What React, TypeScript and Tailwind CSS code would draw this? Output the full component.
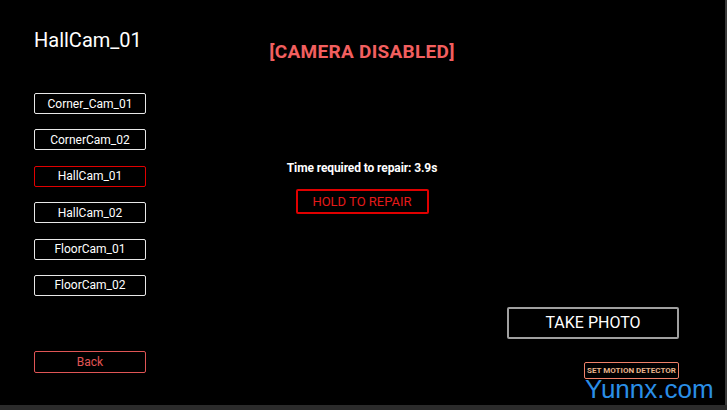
import React from "react";

const cams = ["Corner_Cam_01", "CornerCam_02", "HallCam_01", "HallCam_02", "FloorCam_01", "FloorCam_02"];

export default function App() {
  return (
    <div className="relative w-[727px] h-[410px] bg-black flex flex-col overflow-hidden" style={{ fontFamily: "Roboto, 'Liberation Sans', sans-serif" }}>
      <div className="flex flex-row h-[405px]">
        <div className="flex-1 flex flex-row">
          {/* left column */}
          <div className="w-[146px] shrink-0 pl-[34px] pt-[27px] flex flex-col">
            <div className="text-white text-[20px] leading-[26px] h-[26px]">HallCam_01</div>
            <div className="mt-[40px] flex flex-col gap-[15.4px]">
              {cams.map((c, i) => (
                <div
                  key={c}
                  className={
                    "w-[112px] h-[21px] rounded-[2px] border-[1.5px] flex items-center justify-center text-[12px] text-white " +
                    (i === 2 ? "border-[#e00000]" : "border-[#e8e8e8]")
                  }
                >
                  {c}
                </div>
              ))}
            </div>
            <div className="mt-[55px] w-[112px] h-[22px] rounded-[2px] border-[1.5px] border-[#e05555] flex items-center justify-center text-[12px] text-[#e05555]">
              Back
            </div>
          </div>
          {/* center column */}
          <div className="w-[260px] shrink-0 ml-[86px] pt-[40px] flex flex-col items-center">
            <div className="text-[19px] font-bold text-[#f25f5f] leading-[24px] tracking-[0.3px]">[CAMERA DISABLED]</div>
            <div className="mt-[97px] text-[12px] font-bold text-white leading-[14px] tracking-[-0.1px]">Time required to repair: 3.9s</div>
            <div className="mt-[14px] w-[133px] h-[25px] rounded-[2px] border-2 border-[#e00000] flex items-center justify-center text-[13px] text-[#e41a1a]">
              HOLD TO REPAIR
            </div>
          </div>
          {/* right column */}
          <div className="flex-1 flex flex-col items-end pr-[46px] pt-[307px]">
            <div className="w-[172px] h-[32px] border-2 border-[#a0a0a0] rounded-[2px] flex items-center justify-center text-[16px] text-white">
              TAKE PHOTO
            </div>
            <div className="mt-[23px] w-[95px] h-[17px] border-[1.5px] border-[#f0826a] rounded-[2px] flex items-center justify-center text-[8px] font-bold text-[#e8b48c]">
              SET MOTION DETECTOR
            </div>
          </div>
        </div>
        <div className="w-[2px] bg-[#3a3a3a]" />
      </div>
      <div className="h-[5px] bg-[#2b2b2b]" />
      <div
        className="absolute left-[585px] top-[373px] text-[26px] leading-[32px] text-[#2a8ee6]"
        style={{ fontFamily: "'Liberation Sans', Arial, sans-serif" }}
      >
        Yunnx.com
      </div>
    </div>
  );
}
